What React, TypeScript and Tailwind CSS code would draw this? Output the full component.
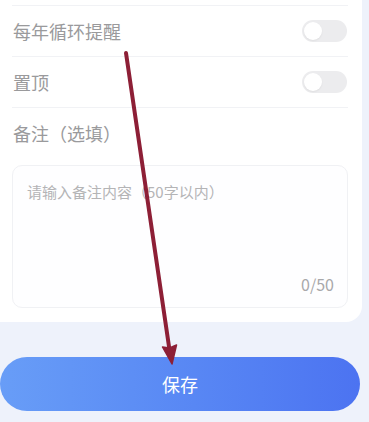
import React from "react";

const font = { fontFamily: '"Noto Sans CJK SC", "Noto Sans", sans-serif' };

function Toggle() {
  return (
    <div className="flex h-[22px] w-[45px] items-center rounded-full bg-[#ececee] px-[2px]">
      <div className="h-[18px] w-[18px] rounded-full bg-white shadow-[0_1px_2px_rgba(0,0,0,0.06)]" />
    </div>
  );
}

function SwitchRow({ label }: { label: string }) {
  return (
    <div className="flex h-[51px] items-center justify-between border-b border-[#f1f2f5] pr-[1px]">
      <span className="pl-[1px] text-[18px] leading-6 text-[#9a9a9c]">{label}</span>
      <Toggle />
    </div>
  );
}

export default function App() {
  return (
    <div className="relative h-[422px] w-full overflow-hidden bg-[#eef2fb]" style={font}>
      <div className="w-[362px] rounded-br-[16px] bg-white pb-[14px] pl-3 pr-[14px] pt-[5px]">
        <div className="border-t border-[#f1f2f5]" />
        <SwitchRow label="每年循环提醒" />
        <SwitchRow label="置顶" />
        <div className="pb-5 pl-[1px] pt-[13px] text-[18px] leading-6 text-[#9a9a9c]">备注（选填）</div>
        <div className="flex h-[143px] flex-col justify-between rounded-[10px] border border-[#f0f1f4] bg-[#fefeff] pb-3 pl-[14px] pr-[13px] pt-[15px]">
          <span className="text-[15px] leading-[22px] text-[#b4b4b6]">请输入备注内容（50字以内）</span>
          <span className="self-end text-[16px] leading-[22px] text-[#a8a8aa]">0/50</span>
        </div>
      </div>

      <div className="mt-[35px] w-[360px]">
        <button
          type="button"
          className="flex h-[54px] w-full items-center justify-center rounded-full bg-gradient-to-r from-[#689df7] to-[#4c73f1] text-[18px] text-white"
        >
          保存
        </button>
      </div>

      <svg className="pointer-events-none absolute inset-0" width="369" height="422" viewBox="0 0 369 422">
        <line x1="126" y1="53" x2="169.5" y2="350" stroke="#8d1f36" strokeWidth="4" strokeLinecap="round" />
        <path d="M172 364 L176.5 345 L169.5 348 L162.5 347 Z" fill="#8d1f36" stroke="#8d1f36" strokeWidth="1.5" strokeLinejoin="round" />
      </svg>
    </div>
  );
}
